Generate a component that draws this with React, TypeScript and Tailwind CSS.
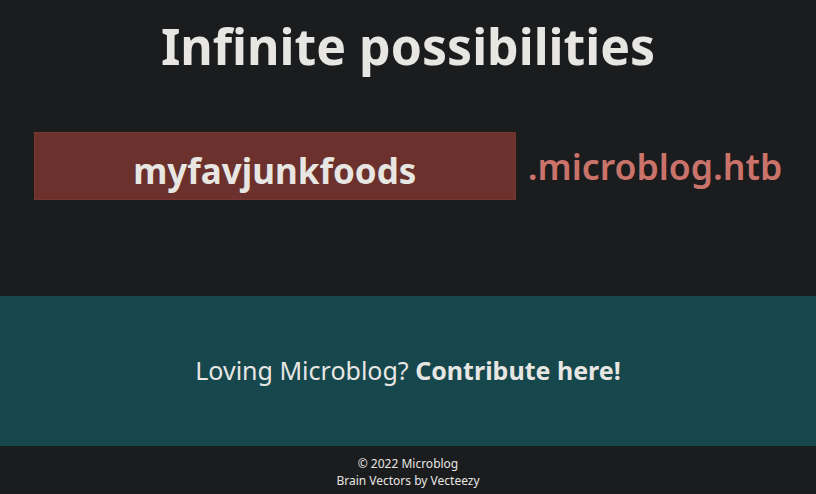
export default function App() {
  return (
    <div className="min-h-[494px] w-full flex flex-col bg-[#1b1c1e] text-[#e8e6e3]" style={{ fontFamily: '"Noto Sans", sans-serif' }}>
      <div className="h-[296px] flex flex-col items-center">
        <h1 className="mt-[16px] text-[50px] leading-[60px] font-bold">Infinite possibilities</h1>
        <div className="mt-[56px] flex items-center gap-[12px]">
          <div className="w-[482px] h-[68px] bg-[#6c312c] border border-[#7a3530] flex items-center justify-center pt-[10px]">
            <span className="text-[35px] leading-[48px] font-bold">myfavjunkfoods</span>
          </div>
          <span className="text-[35.6px] leading-[48px] font-semibold text-[#c9736a] -mt-[1px]">.microblog.htb</span>
        </div>
      </div>
      <div className="h-[150px] bg-[#15474c] flex items-center justify-center">
        <p className="text-[25px]">
          Loving Microblog? <span className="font-bold">Contribute here!</span>
        </p>
      </div>
      <div className="flex-1 flex flex-col items-center justify-center text-[12px] leading-[17px] pt-[4px]">
        <div>© 2022 Microblog</div>
        <div>Brain Vectors by Vecteezy</div>
      </div>
    </div>
  );
}
